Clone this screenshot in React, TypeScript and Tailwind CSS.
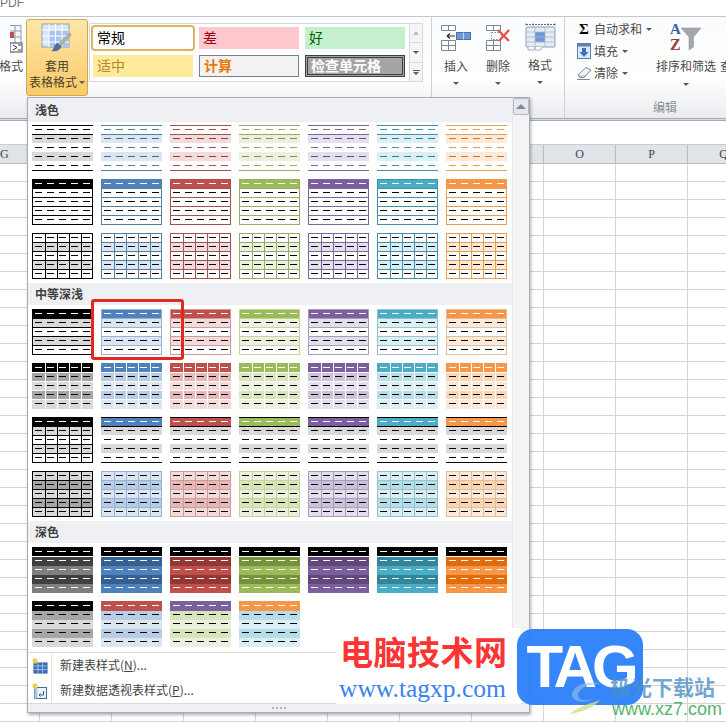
type Kind =
  | "lightLines"
  | "lightBox"
  | "lightGrid"
  | "medBox"
  | "medGrid"
  | "medRule"
  | "medRuleBlack"
  | "medSoftGrid"
  | "dark";

interface Palette {
  accent: string;
  line: string;
  soft: string;
  light: string;
  mid: string;
  dark: string;
  dash: string;
}

const black: Palette = { accent: "#000000", line: "#000000", soft: "#000000", light: "#d9d9d9", mid: "#a6a6a6", dark: "#404040", dash: "#000000" };
const blue: Palette = { accent: "#4f81bd", line: "#53809f", soft: "#95b3d7", light: "#dce6f1", mid: "#b8cce4", dark: "#366092", dash: "#3f6c96" };
const red: Palette = { accent: "#c0504d", line: "#a5514f", soft: "#d09a99", light: "#f2dcdb", mid: "#e6b8b7", dark: "#963634", dash: "#8f3f3d" };
const green: Palette = { accent: "#9bbb59", line: "#97ad62", soft: "#c4d79b", light: "#ebf1de", mid: "#d8e4bc", dark: "#76933c", dash: "#7d9440" };
const purple: Palette = { accent: "#7b5f9e", line: "#7a669a", soft: "#a99cbc", light: "#e4dfec", mid: "#ccc0da", dark: "#60497a", dash: "#64507f" };
const teal: Palette = { accent: "#4bacc6", line: "#3e93a8", soft: "#92c5d2", light: "#daeef3", mid: "#b7dee8", dark: "#31869b", dash: "#2f7d90" };
const orange: Palette = { accent: "#f79646", line: "#e8a04e", soft: "#e0c09c", light: "#fde9d9", mid: "#fcd5b4", dark: "#e26b0a", dash: "#c77a2c" };
const palettes = [black, blue, red, green, purple, teal, orange];

const rowTops = [0, 9, 18, 27, 36];
const colLefts = [12, 24, 36, 48];

function Fill({ y, h, color }: { y: number; h: number; color: string }) {
  return <rect x="0" y={y} width="61" height={h} fill={color} />;
}

function HLine({ y, color }: { y: number; color: string }) {
  return <rect x="0" y={y} width="61" height="1" fill={color} />;
}

function Frame({ color, vertical }: { color: string; vertical?: boolean }) {
  return (
    <>
      {rowTops.slice(1).map((y) => (
        <HLine key={y} y={y} color={color} />
      ))}
      {vertical &&
        colLefts.map((x) => <rect key={x} x={x + 0.5} y="0" width="1" height="46" fill={color} />)}
      <rect x="0.5" y="0.5" width="60" height="45" fill="none" stroke={color} />
    </>
  );
}

function Dashes({ colors }: { colors: string[] }) {
  return (
    <>
      {colors.map((color, row) =>
        [3, 15, 27, 39, 51].map((x) => (
          <rect key={`${row}-${x}`} x={x} y={4 + row * 9} width="7" height="1" fill={color} />
        )),
      )}
    </>
  );
}

// thumbnail of one table style
function Swatch({ kind, p }: { kind: Kind; p: Palette }) {
  const k = "#000000";
  const w = "#ffffff";
  return (
    <svg width="61" height="46" viewBox="0 0 61 46" shapeRendering="crispEdges" className="block">
      {kind === "lightLines" && (
        <>
          <Fill y={9} h={9} color={p.light} />
          <Fill y={27} h={9} color={p.light} />
          <HLine y={0} color={p.line} />
          <HLine y={9} color={p.line} />
          <HLine y={45} color={p.line} />
          <Dashes colors={[p.line, p.dash, p.line, p.dash, p.line]} />
        </>
      )}
      {kind === "lightBox" && (
        <>
          <Fill y={0} h={9} color={p.accent} />
          <Frame color={p.line} />
          <Dashes colors={[w, k, k, k, k]} />
        </>
      )}
      {kind === "lightGrid" && (
        <>
          <Fill y={9} h={9} color={p.light} />
          <Fill y={27} h={9} color={p.light} />
          <Frame color={p.line} vertical />
          <Dashes colors={[k, k, k, k, k]} />
        </>
      )}
      {kind === "medBox" && (
        <>
          <Fill y={0} h={9} color={p.accent} />
          <Fill y={9} h={9} color={p.light} />
          <Fill y={27} h={9} color={p.light} />
          <Frame color={p.soft} />
          <Dashes colors={[w, k, k, k, k]} />
        </>
      )}
      {kind === "medGrid" && (
        <>
          <Fill y={0} h={9} color={p.accent} />
          <Fill y={9} h={9} color={p.mid} />
          <Fill y={18} h={9} color={p.light} />
          <Fill y={27} h={9} color={p.mid} />
          <Fill y={36} h={10} color={p.light} />
          {rowTops.slice(1).map((y) => (
            <HLine key={y} y={y} color={w} />
          ))}
          {colLefts.map((x) => (
            <rect key={x} x={x + 0.5} y="0" width="1" height="46" fill={w} />
          ))}
          <Dashes colors={[w, k, k, k, k]} />
        </>
      )}
      {kind === "medRule" && (
        <>
          <Fill y={0} h={9} color={p.accent} />
          <Fill y={9} h={9} color={black.light} />
          <Fill y={27} h={9} color={black.light} />
          <HLine y={0} color={k} />
          <HLine y={9} color={k} />
          <HLine y={45} color={k} />
          <Dashes colors={[w, k, k, k, k]} />
        </>
      )}
      {kind === "medRuleBlack" && (
        <>
          <Fill y={0} h={9} color={k} />
          <Fill y={9} h={9} color={black.light} />
          <Fill y={27} h={9} color={black.light} />
          <Frame color={k} vertical />
          <Dashes colors={[w, k, k, k, k]} />
        </>
      )}
      {kind === "medSoftGrid" && (
        <>
          <Fill y={0} h={46} color={p.light} />
          <Fill y={9} h={9} color={p.mid} />
          <Fill y={27} h={9} color={p.mid} />
          <Frame color={p.soft} vertical />
          <Dashes colors={[k, k, k, k, k]} />
        </>
      )}
      {kind === "dark" && (
        <>
          <Fill y={0} h={9} color={k} />
          <Fill y={10} h={9} color={p.dark} />
          <Fill y={19} h={9} color={p === black ? "#7f7f7f" : p.accent} />
          <Fill y={28} h={9} color={p.dark} />
          <Fill y={37} h={9} color={p === black ? "#7f7f7f" : p.accent} />
          <Dashes colors={[w, w, w, w, w]} />
        </>
      )}
    </svg>
  );
}

function DarkAlt({ head, mid, light }: { head: string; mid: string; light: string }) {
  const k = "#000000";
  return (
    <svg width="61" height="46" viewBox="0 0 61 46" shapeRendering="crispEdges" className="block">
      <Fill y={0} h={10} color={head} />
      <Fill y={10} h={9} color={mid} />
      <Fill y={19} h={9} color={light} />
      <Fill y={28} h={9} color={mid} />
      <Fill y={37} h={9} color={light} />
      <Dashes colors={["#ffffff", k, k, k, k]} />
    </svg>
  );
}

function SwatchRow({ kind, firstKind }: { kind: Kind; firstKind?: Kind }) {
  return (
    <>
      {palettes.map((p, i) => (
        <Swatch key={i} kind={i === 0 && firstKind ? firstKind : kind} p={p} />
      ))}
    </>
  );
}

function Band({ label, className }: { label: string; className: string }) {
  return (
    <div className={`flex items-center bg-[#eef0f3] pl-[7px] text-[12px] font-bold text-[#3f3f3f] ${className}`}>
      {label}
    </div>
  );
}

function Caret({ className = "" }: { className?: string }) {
  return <span className={`inline-block h-0 w-0 border-x-[3px] border-t-[3px] border-x-transparent border-t-[#5a5a5a] ${className}`} />;
}

function TableBrushIcon() {
  return (
    <svg width="32" height="30" viewBox="0 0 32 30">
      <rect x="1" y="1" width="27" height="23" fill="#dbe6f5" stroke="#8d9db5" />
      <rect x="8" y="7" width="20" height="17" fill="#a9c4ee" />
      <path d="M1 7H28M1 13H28M1 19H28M8 1V24M14.5 1V24M21 1V24" stroke="#fff" strokeWidth="1" />
      <path d="M29 10L17 21L20 23L30 12Z" fill="#b9b39c" stroke="#8a8168" strokeWidth="0.5" />
      <path d="M16 20C12 22 14 26 10 28C15 29 20 27 20.5 23Z" fill="#4e6f9c" />
    </svg>
  );
}

function InsertIcon() {
  return (
    <svg width="32" height="27" viewBox="0 0 32 27">
      <path d="M1.5 1.5H15.5V6.5H1.5ZM8.5 1.5V6.5" fill="#fff" stroke="#7d8692" />
      <path d="M1.5 16.5H15.5V26.5H1.5ZM1.5 21.5H15.5M8.5 16.5V26.5" fill="#fff" stroke="#7d8692" />
      <rect x="16.5" y="8.5" width="14" height="7" fill="#6f96d8" stroke="#4a6ea8" />
      <path d="M23.5 8.5V15.5" stroke="#c9d8f0" />
      <path d="M7 12H15M7 12L10 9.5M7 12L10 14.5" stroke="#2b2b2b" strokeWidth="1.2" fill="none" />
    </svg>
  );
}

function DeleteIcon() {
  return (
    <svg width="26" height="27" viewBox="0 0 26 27">
      <path d="M1.5 1.5H15.5V6.5H1.5ZM8.5 1.5V6.5" fill="#fff" stroke="#7d8692" />
      <path d="M1.5 16.5H15.5V26.5H1.5ZM1.5 21.5H15.5M8.5 16.5V26.5" fill="#fff" stroke="#7d8692" />
      <rect x="6.5" y="8.5" width="10" height="7" fill="#fff" stroke="#7d8692" strokeDasharray="1.5 1.5" />
      <path d="M13 6L24 17M24 6L14 17" stroke="#e2574c" strokeWidth="2.4" />
    </svg>
  );
}

function FormatIcon() {
  return (
    <svg width="31" height="29" viewBox="0 0 31 29">
      <path d="M1 1.5H30M1 .5V3M8 .5V3M23 .5V3M30 .5V3" stroke="#444" strokeWidth="0.8" strokeDasharray="2 1" fill="none" />
      <rect x="1" y="4" width="29" height="20" rx="1" fill="#e4ecf6" stroke="#8d9db5" />
      <rect x="10" y="9" width="10" height="10" fill="#6f96d8" />
      <path d="M1 9H30M1 14H30M1 19H30M10 4V24M20 4V24" stroke="#a9b6c8" strokeWidth="0.8" />
      <path d="M3 24V27H9L10 24M10 24V27H16L17 24" fill="#fff" stroke="#8d9db5" strokeWidth="0.8" />
    </svg>
  );
}

function FillIcon() {
  return (
    <svg width="14" height="16" viewBox="0 0 14 16">
      <rect x="0.5" y="0.5" width="13" height="15" fill="#dce8f8" stroke="#5a7fb5" />
      <rect x="0.5" y="0.5" width="13" height="3" fill="#5a7fb5" />
      <path d="M5 5H9V9H11.5L7 14L2.5 9H5Z" fill="#3f72c4" />
    </svg>
  );
}

function EraserIcon() {
  return (
    <svg width="15" height="14" viewBox="0 0 15 14">
      <path d="M1 9L9 1.5L14 4L7 11.5H3Z" fill="#f2f4f7" stroke="#7f8894" />
      <path d="M1 9L3 11.5H7L9 9" fill="#cfd4da" stroke="#7f8894" />
      <path d="M0 13.5H13" stroke="#7f8894" />
    </svg>
  );
}

function SortIcon() {
  return (
    <svg width="32" height="29" viewBox="0 0 32 29">
      <text x="0" y="12" fontFamily="Liberation Serif" fontWeight="700" fontSize="15" fill="#3c62a8">A</text>
      <text x="0" y="28" fontFamily="Liberation Serif" fontWeight="700" fontSize="16" fill="#9c3e36">Z</text>
      <path d="M11 6H31L23.5 15V25L19 28V15Z" fill="#a4a7ab" stroke="#8a8d91" strokeWidth="0.5" />
    </svg>
  );
}

function NewTableIcon() {
  return (
    <svg width="16" height="16" viewBox="0 0 16 16">
      <rect x="2" y="5" width="13" height="10" fill="#3f6fb5" stroke="#2f5a9a" />
      <path d="M2 8H15M2 11.5H15M6 5V15M10.5 5V15" stroke="#b8cde8" strokeWidth="0.8" />
      <path d="M3 0V6M0 3H6M1 1L5 5M5 1L1 5" stroke="#e8d24c" strokeWidth="1.1" />
    </svg>
  );
}

function NewPivotIcon() {
  return (
    <svg width="16" height="16" viewBox="0 0 16 16">
      <rect x="2.5" y="4.5" width="12" height="11" fill="#eef3fa" stroke="#3f6a9f" />
      <rect x="2.5" y="4.5" width="3" height="11" fill="#a9c4e4" />
      <path d="M7 12H11.5V8M7 12L8.5 10.5M7 12L8.5 13.5" stroke="#2f5a9a" fill="none" />
      <path d="M3 0V6M0 3H6M1 1L5 5M5 1L1 5" stroke="#e8d24c" strokeWidth="1.1" />
    </svg>
  );
}

function ColumnButton({ icon, label, iconBox }: { icon: React.ReactNode; label: string; iconBox: string }) {
  return (
    <div className="flex w-[42px] flex-col items-center text-[12px] text-[#4a4a4a]">
      <div className={`flex items-start justify-center ${iconBox}`}>{icon}</div>
      <span className="mt-[5px] leading-[16px]">{label}</span>
      <Caret className="mt-[8px]" />
    </div>
  );
}

function EditRow({ icon, label }: { icon: React.ReactNode; label: string }) {
  return (
    <div className="flex h-[22px] items-center text-[12px] text-[#4a4a4a]">
      <span className="flex w-[18px] justify-center">{icon}</span>
      <span className="ml-[1px]">{label}</span>
      <Caret className="ml-[4px]" />
    </div>
  );
}

function Ribbon() {
  return (
    <div className="flex h-[102px] overflow-hidden border-t border-[#c4c6c9] bg-gradient-to-b from-[#fbfcfd] via-[#ffffff] via-60% to-[#e9ecef]">
      {/* cut off group on the left */}
      <div className="flex w-[26px] shrink-0 flex-col items-end pr-[3px] pt-[8px] text-[12px] text-[#4a4a4a]">
        <svg width="13" height="28" viewBox="0 0 13 28">
          <path d="M0 .5H11V18M0 6H11M0 12H11M5 0V18" stroke="#8d9db5" fill="#f4f6f9" />
          <rect x="0" y="7" width="4" height="6" fill="#c0504d" />
          <rect x="0" y="18" width="12" height="9" fill="#fff" stroke="#444" />
          <path d="M3 20L7 22.5L3 25M8 20H11M8 25H11" stroke="#333" fill="none" />
        </svg>
        <span className="mt-[5px] whitespace-nowrap leading-[16px]">格式</span>
      </div>

      <div className="mt-[2px] flex h-[77px] w-[62px] shrink-0 flex-col items-center rounded-[3px] border border-[#d3a64f] bg-gradient-to-b from-[#fde7a7] to-[#fbca68] pt-[3px] text-[12px] text-[#4a3f2a]">
        <TableBrushIcon />
        <span className="mt-[5px] leading-[16px]">套用</span>
        <span className="flex items-center leading-[16px]">
          表格格式
          <Caret className="ml-[2px]" />
        </span>
      </div>

      {/* cell styles gallery */}
      <div className="ml-[1px] mt-[6px] flex h-[59px] shrink-0">
        <div className="grid w-[320px] grid-cols-[100px_100px_100px] grid-rows-[22px_22px] gap-x-[6px] gap-y-[6px] border-y border-l border-[#d5d8dc] bg-white pl-[3px] pt-[3px] text-[14px] leading-[20px]">
          <div className="rounded-[2px] bg-white pl-[4px] text-black outline-2 outline-[#e0b45a]">常规</div>
          <div className="bg-[#ffc7ce] pl-[4px] text-[#9c0006]">差</div>
          <div className="bg-[#c6efce] pl-[4px] text-[#006100]">好</div>
          <div className="bg-[#ffeb9c] pl-[4px] text-[#b8862b]">适中</div>
          <div className="border border-[#7f7f7f] bg-[#f2f2f2] pl-[4px] font-bold leading-[18px] text-[#e8770a]">计算</div>
          <div className="border-[3px] border-double border-[#3f3f3f] bg-[#a5a5a5] pl-[3px] font-bold leading-[15px] text-white">检查单元格</div>
        </div>
        <div className="flex w-[14px] flex-col border border-[#d5d8dc] bg-[#f3f5f7]">
          <div className="flex h-[19px] items-center justify-center border-b border-[#d5d8dc]">
            <span className="h-0 w-0 border-x-[3px] border-b-[4px] border-x-transparent border-b-[#b5bac0]" />
          </div>
          <div className="flex h-[20px] items-center justify-center border-b border-[#d5d8dc]">
            <Caret />
          </div>
          <div className="flex flex-1 flex-col items-center justify-center gap-[1px]">
            <span className="h-px w-[7px] bg-[#5a5a5a]" />
            <Caret />
          </div>
        </div>
      </div>

      {/* cells group */}
      <div className="ml-[8px] flex w-[134px] shrink-0 border-x border-[#cfd2d6] pl-[3px] pt-[7px]">
        <ColumnButton icon={<InsertIcon />} label="插入" iconBox="h-[29px]" />
        <ColumnButton icon={<DeleteIcon />} label="删除" iconBox="h-[29px]" />
        <ColumnButton icon={<FormatIcon />} label="格式" iconBox="h-[29px] -mt-[1px]" />
      </div>

      {/* editing group */}
      <div className="flex w-[200px] shrink-0 flex-col">
        <div className="flex pl-[10px]">
          <div className="flex w-[81px] shrink-0 flex-col pt-[1px]">
            <EditRow icon={<span className="font-['Liberation_Serif'] text-[15px] font-bold leading-none text-black">Σ</span>} label="自动求和" />
            <EditRow icon={<FillIcon />} label="填充" />
            <EditRow icon={<EraserIcon />} label="清除" />
          </div>
          <div className="flex w-[60px] shrink-0 flex-col items-center pt-[5px] text-[12px] text-[#4a4a4a]">
            <SortIcon />
            <span className="mt-[7px] whitespace-nowrap leading-[16px]">排序和筛选</span>
            <Caret className="mt-[9px]" />
          </div>
          <span className="ml-[4px] mt-[41px] whitespace-nowrap text-[12px] leading-[16px] text-[#4a4a4a]">查找和选择</span>
        </div>
        <div className="mt-auto pb-[3px] text-center text-[12px] leading-[16px] text-[#8a8d91]">编辑</div>
      </div>
    </div>
  );
}

const columns = ["G", "H", "I", "J", "K", "L", "M", "N", "O", "P", "Q"];
const rows = Array.from({ length: 31 }, (_, i) => i);

function Sheet() {
  return (
    <div className="flex flex-col overflow-hidden">
      <div className="h-[3px] border-y border-[#a8abaf] bg-[#d8dbde]" />
      <div className="h-[24px] border-b border-[#c9ccd0] bg-white" />
      <div className="flex h-[19px] border-b border-[#b9bcc0] bg-[#e0e4e8] font-['Liberation_Serif'] text-[12px] leading-[18px] text-[#444]">
        {columns.map((c, i) => (
          <div
            key={c}
            className={`shrink-0 border-r border-[#b9bec4] ${i === 0 ? "w-[40px] text-left" : "w-[72px] text-center"}`}
          >
            {c}
          </div>
        ))}
      </div>
      {rows.map((r) => (
        <div key={r} className="flex h-[18px] shrink-0">
          {columns.map((c, i) => (
            <div
              key={c}
              className={`h-[18px] shrink-0 border-r border-b border-[#d4d4d4] ${i === 0 ? "w-[40px]" : "w-[72px]"}`}
            />
          ))}
        </div>
      ))}
    </div>
  );
}

function StylePopup() {
  return (
    <div className="absolute left-[27px] top-[97px] flex h-[616px] w-[503px] flex-col border border-[#a9acb0] bg-white shadow-[1px_2px_3px_rgba(0,0,0,0.3)]">
      <div className="flex min-h-0 flex-1">
        <div className="w-[484px] shrink-0">
          <Band label="浅色" className="h-[24px]" />
          <div className="grid grid-cols-[repeat(7,61px)] gap-x-[8px] gap-y-[8px] pb-[4px] pl-[4px] pt-[3px]">
            <SwatchRow kind="lightLines" />
            <SwatchRow kind="lightBox" />
            <SwatchRow kind="lightGrid" />
          </div>
          <Band label="中等深浅" className="h-[22px]" />
          <div className="grid grid-cols-[repeat(7,61px)] gap-x-[8px] gap-y-[8px] pb-[4px] pl-[4px] pt-[4px]">
            <SwatchRow kind="medBox" />
            <SwatchRow kind="medGrid" />
            <SwatchRow kind="medRule" firstKind="medRuleBlack" />
            <SwatchRow kind="medSoftGrid" />
          </div>
          <Band label="深色" className="h-[22px]" />
          <div className="grid grid-cols-[repeat(7,61px)] gap-x-[8px] gap-y-[8px] pb-[4px] pl-[4px] pt-[4px]">
            <SwatchRow kind="dark" />
            <DarkAlt head="#000000" mid="#a6a6a6" light="#d9d9d9" />
            <DarkAlt head="#c0504d" mid="#b8cce4" light="#dce6f1" />
            <DarkAlt head="#7b5f9e" mid="#d8e4bc" light="#ebf1de" />
            <DarkAlt head="#f79646" mid="#b7dee8" light="#daeef3" />
          </div>
        </div>
        <div className="flex-1 border-l border-[#e6e8ea] bg-[#f3f4f6]">
          <div className="flex h-[17px] w-[16px] items-center justify-center rounded-[2px] border border-[#b5b9be] bg-[#e4e8ed]">
            <span className="h-0 w-0 border-x-[5px] border-b-[5px] border-x-transparent border-b-[#7d8ba0]" />
          </div>
        </div>
      </div>
      <div className="flex h-[51px] shrink-0 border-t border-[#d9dbde] text-[12px] text-[#444]">
        <div className="flex w-[24px] shrink-0 flex-col items-center border-r border-[#e2e4e7]">
          <div className="flex h-[25px] items-center"><NewTableIcon /></div>
          <div className="flex h-[25px] items-center"><NewPivotIcon /></div>
        </div>
        <div className="-mt-[1px] flex flex-col pl-[8px]">
          <div className="flex h-[25px] items-center">
            新建表样式(<span className="underline">N</span>)...
          </div>
          <div className="flex h-[25px] items-center">
            新建数据透视表样式(<span className="underline">P</span>)...
          </div>
        </div>
      </div>
      <div className="flex h-[9px] shrink-0 items-center justify-center gap-[2px] border-t border-[#d9dbde] bg-[#eef0f3] pl-[1px]">
        <span className="size-[2px] bg-[#b5b9be]" />
        <span className="size-[2px] bg-[#b5b9be]" />
        <span className="size-[2px] bg-[#b5b9be]" />
        <span className="size-[2px] bg-[#b5b9be]" />
      </div>
    </div>
  );
}

function Watermarks() {
  return (
    <>
      <div className="absolute left-[336px] top-[628px] h-[76px] w-[185px] bg-white/95" />
      <div className="absolute left-[340px] top-[629px] whitespace-nowrap text-[33px] font-bold leading-[44px] tracking-[0.5px] text-[#fb3434]">
        电脑技术网
      </div>
      <div className="absolute left-[339px] top-[675px] whitespace-nowrap font-['Liberation_Serif'] text-[25.5px] leading-[28px] text-[#3b82f0]">
        www.tagxp.com
      </div>
      <div className="absolute left-[517px] top-[629px] flex h-[76px] w-[126px] items-center justify-center rounded-[16px] bg-[#2b7ffb]/95 font-['Liberation_Sans'] text-[60px] font-bold leading-none tracking-[-5px] text-white">
        TAG
      </div>
      <svg className="absolute left-[566px] top-[676px]" width="46" height="40" viewBox="0 0 46 40">
        <path d="M6 18C8 8 24 4 36 8C26 7 14 11 12 18C11 23 18 26 26 23C20 28 5 26 6 18Z" fill="#9cc1de" opacity="0.6" />
        <path d="M4 38C12 30 24 28 34 24C28 32 16 36 4 38Z" fill="#cfe08a" opacity="0.8" />
      </svg>
      <div className="absolute left-[610px] top-[673px] whitespace-nowrap text-[21px] font-bold leading-[26px] text-[#4a8fc4]/80">
        极光下载站
      </div>
      <div className="absolute left-[612px] top-[699px] whitespace-nowrap font-['Liberation_Sans'] text-[18px] leading-[20px] text-[#55b56f]">
        www.xz7.com
      </div>
    </>
  );
}

export default function App() {
  return (
    <div className="relative h-[725px] w-[726px] overflow-hidden bg-white font-['Noto_Sans_CJK_SC',sans-serif]">
      <div className="h-[16px] overflow-hidden bg-white font-['Liberation_Sans'] text-[12px] leading-[6px] text-[#777]">
        PDF
      </div>
      <Ribbon />
      <Sheet />
      <StylePopup />
      {/* red highlight round the picked style */}
      <div className="absolute left-[91px] top-[299px] h-[61px] w-[93px] rounded-[3px] border-[3px] border-[#e3291f]" />
      <Watermarks />
    </div>
  );
}
